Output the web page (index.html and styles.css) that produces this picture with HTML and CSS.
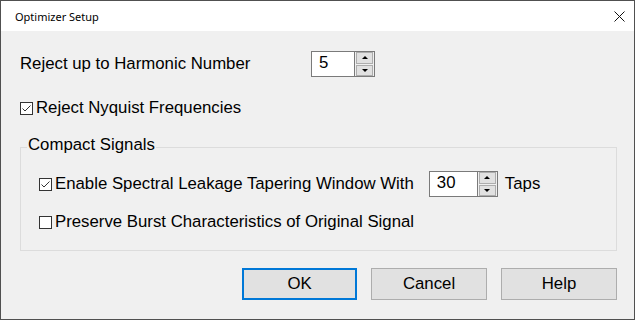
FILE: index.html
```html
<!DOCTYPE html>
<html lang="en">
<head>
  <meta charset="UTF-8">
  <title>Optimizer Setup</title>
  <link rel="stylesheet" href="styles.css">
</head>
<body>
  <div class="window">
    <div class="titlebar">
      <span class="title">Optimizer Setup</span>
      <svg class="close" width="11" height="11" viewBox="0 0 11 11">
        <path d="M0.5 0.5 L10.5 10.5 M10.5 0.5 L0.5 10.5" stroke="#111" stroke-width="1" fill="none"/>
      </svg>
    </div>

    <div class="content">
      <div class="row harmonic">
        <span class="row-label">Reject up to Harmonic Number</span>
        <div class="spinner spinner-small">
          <span class="spin-value">5</span>
          <span class="spin-buttons">
            <span class="spin-btn"><span class="arrow-up"></span></span>
            <span class="spin-btn"><span class="arrow-down"></span></span>
          </span>
        </div>
      </div>

      <div class="row check-row">
        <span class="check">
          <svg width="13" height="13" viewBox="0 0 13 13"><path d="M2.5 6.5 L5 9 L10.5 3.5" stroke="#333" fill="none"/></svg>
        </span>
        <span>Reject Nyquist Frequencies</span>
      </div>

      <fieldset class="group">
        <legend>Compact Signals</legend>
        <div class="row group-row taper-row">
          <span class="check">
            <svg width="13" height="13" viewBox="0 0 13 13"><path d="M2.5 6.5 L5 9 L10.5 3.5" stroke="#333" fill="none"/></svg>
          </span>
          <span>Enable Spectral Leakage Tapering Window With</span>
          <div class="spinner spinner-wide">
            <span class="spin-value">30</span>
            <span class="spin-buttons">
              <span class="spin-btn"><span class="arrow-up"></span></span>
              <span class="spin-btn"><span class="arrow-down"></span></span>
            </span>
          </div>
          <span class="taps">Taps</span>
        </div>
        <div class="row group-row burst-row">
          <span class="check"></span>
          <span>Preserve Burst Characteristics of Original Signal</span>
        </div>
      </fieldset>

      <div class="buttons">
        <button class="btn btn-default">OK</button>
        <button class="btn">Cancel</button>
        <button class="btn">Help</button>
      </div>
    </div>
  </div>
</body>
</html>
```

FILE: styles.css
```css
body {
  margin: 0;
  background-color: #3a3a3a;
}

.window {
  width: 635px;
  height: 320px;
  box-sizing: border-box;
  border: 1px solid #505050;
  background-color: #f0f0f0;
  font-family: "Liberation Sans", Arial, sans-serif;
  font-size: 16.8px;
  color: #000;
}

.titlebar {
  height: 30px;
  background-color: #fff;
  display: flex;
  align-items: center;
  justify-content: space-between;
  padding: 0 9px 0 14px;
}

.title {
  font-family: "Noto Sans", sans-serif;
  font-size: 11px;
  color: #000;
}

.close {
  display: block;
}

.content {
  padding: 20px 17px 0 19px;
}

.row {
  display: flex;
  align-items: center;
}

.harmonic {
  height: 26px;
}

.row-label {
  width: 291px;
}

.check-row {
  margin-top: 21px;
  height: 20px;
}

.check {
  width: 13px;
  height: 13px;
  box-sizing: border-box;
  border: 1px solid #333;
  background-color: #fff;
  margin-right: 3px;
  display: flex;
}

.check svg {
  margin: -1px;
}

/* spin boxes */
.spinner {
  display: flex;
  height: 26px;
  box-sizing: border-box;
  border: 1px solid #7a7a7a;
  background-color: #fff;
}

.spinner-small {
  width: 64px;
}

.spinner-wide {
  width: 69px;
  margin-left: 15px;
}

.spin-value {
  flex: 1;
  padding-left: 7px;
  line-height: 22px;
  border-right: 1px solid #7a7a7a;
}

.spin-buttons {
  width: 17px;
  display: flex;
  flex-direction: column;
  gap: 1px;
  padding: 0 1px;
  background-color: #f0f0f0;
}

.spin-btn {
  flex: 1;
  border: 1px solid #adadad;
  background-color: #e1e1e1;
  display: flex;
  align-items: center;
  justify-content: center;
}

.arrow-up {
  border-left: 3px solid transparent;
  border-right: 3px solid transparent;
  border-bottom: 3px solid #000;
}

.arrow-down {
  border-left: 3px solid transparent;
  border-right: 3px solid transparent;
  border-top: 3px solid #000;
}

/* group box */
.group {
  margin: 19px 0 0 0;
  padding: 0 7px 18px 6px;
  border: 1px solid #dcdcdc;
  min-width: 0;
}

.group legend {
  padding: 0 1px 4px 1px;
  line-height: 16px;
}

.group-row {
  padding-left: 12px;
}

.taper-row {
  margin-top: 14px;
  height: 26px;
}

.taps {
  margin-left: 7px;
}

.burst-row {
  margin-top: 15px;
  height: 20px;
}

/* dialog buttons */
.buttons {
  display: flex;
  justify-content: flex-end;
  gap: 14px;
  margin-top: 17px;
}

.btn {
  width: 116px;
  height: 32px;
  border: 1px solid #adadad;
  background-color: #e1e1e1;
  font-family: "Liberation Sans", Arial, sans-serif;
  font-size: 16.8px;
  color: #000;
  padding: 0;
}

.btn-default {
  width: 115px;
  border: 2px solid #0078d7;
}
```
